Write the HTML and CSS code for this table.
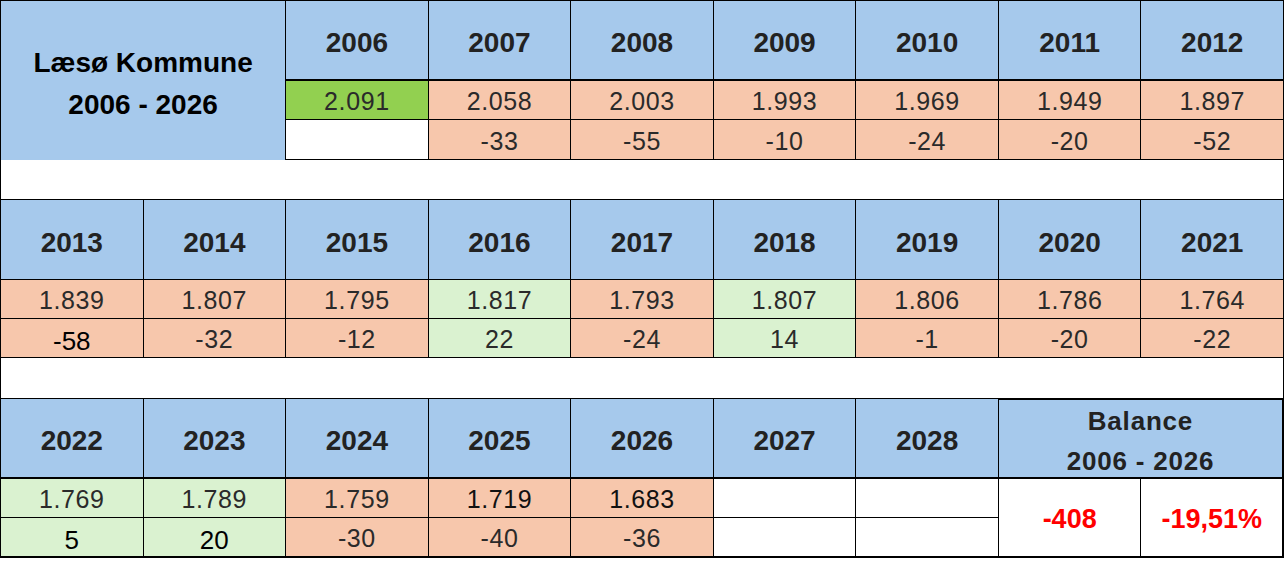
FILE: index.html
```html
<!DOCTYPE html>
<html lang="da">
<head>
<meta charset="utf-8">
<title>Læsø Kommune 2006 - 2026</title>
<link rel="stylesheet" href="styles.css">
</head>
<body>
<div class="sheet">
  <div class="cell title">Læsø Kommune<br>2006 - 2026</div>
  <div class="cell hd hd-thick">2006</div>
  <div class="cell hd hd-thick">2007</div>
  <div class="cell hd hd-thick">2008</div>
  <div class="cell hd hd-thick">2009</div>
  <div class="cell hd hd-thick">2010</div>
  <div class="cell hd hd-thick">2011</div>
  <div class="cell hd hd-thick">2012</div>

  <div class="cell val bright">2.091</div>
  <div class="cell val neg">2.058</div>
  <div class="cell val neg">2.003</div>
  <div class="cell val neg">1.993</div>
  <div class="cell val neg">1.969</div>
  <div class="cell val neg">1.949</div>
  <div class="cell val neg">1.897</div>

  <div class="cell val empty"></div>
  <div class="cell val neg">-33</div>
  <div class="cell val neg">-55</div>
  <div class="cell val neg">-10</div>
  <div class="cell val neg">-24</div>
  <div class="cell val neg">-20</div>
  <div class="cell val neg">-52</div>

  <div class="cell spacer"></div>

  <div class="cell hd">2013</div>
  <div class="cell hd">2014</div>
  <div class="cell hd">2015</div>
  <div class="cell hd">2016</div>
  <div class="cell hd">2017</div>
  <div class="cell hd">2018</div>
  <div class="cell hd">2019</div>
  <div class="cell hd">2020</div>
  <div class="cell hd">2021</div>

  <div class="cell val neg">1.839</div>
  <div class="cell val neg">1.807</div>
  <div class="cell val neg">1.795</div>
  <div class="cell val pos">1.817</div>
  <div class="cell val neg">1.793</div>
  <div class="cell val pos">1.807</div>
  <div class="cell val neg">1.806</div>
  <div class="cell val neg">1.786</div>
  <div class="cell val neg">1.764</div>

  <div class="cell val neg alt">-58</div>
  <div class="cell val neg">-32</div>
  <div class="cell val neg">-12</div>
  <div class="cell val pos">22</div>
  <div class="cell val neg">-24</div>
  <div class="cell val pos">14</div>
  <div class="cell val neg">-1</div>
  <div class="cell val neg">-20</div>
  <div class="cell val neg">-22</div>

  <div class="cell spacer"></div>

  <div class="cell hd hd-thick">2022</div>
  <div class="cell hd hd-thick">2023</div>
  <div class="cell hd hd-thick">2024</div>
  <div class="cell hd hd-thick">2025</div>
  <div class="cell hd hd-thick">2026</div>
  <div class="cell hd hd-thick">2027</div>
  <div class="cell hd hd-thick">2028</div>
  <div class="cell hd hd-thick balance">Balance<br>2006 - 2026</div>

  <div class="cell val pos">1.769</div>
  <div class="cell val pos">1.789</div>
  <div class="cell val neg">1.759</div>
  <div class="cell val neg dark">1.719</div>
  <div class="cell val neg dark">1.683</div>
  <div class="cell val empty"></div>
  <div class="cell val empty"></div>
  <div class="cell total">-408</div>
  <div class="cell total total-last">-19,51%</div>

  <div class="cell val pos alt last">5</div>
  <div class="cell val pos alt last">20</div>
  <div class="cell val neg last">-30</div>
  <div class="cell val neg last">-40</div>
  <div class="cell val neg last">-36</div>
  <div class="cell val empty last"></div>
  <div class="cell val empty last"></div>
</div>
</body>
</html>
```

FILE: styles.css
```css
html, body {
  margin: 0;
  padding: 0;
  background: #ffffff;
}

body {
  font-family: "Liberation Sans", Arial, sans-serif;
}

.sheet {
  width: 1284px;
  box-sizing: border-box;
  display: grid;
  grid-template-columns: repeat(9, 1fr);
  grid-template-rows: 80px 39px 40px 40px 80px 39px 39px 41px 80px 39px 40px;
  border-left: 1px solid #000;
  border-top: 1px solid #000;
}

.cell {
  box-sizing: border-box;
  border-right: 1px solid #000;
  border-bottom: 1px solid #000;
  display: flex;
  align-items: center;
  justify-content: center;
  text-align: center;
}

.title {
  grid-column: span 2;
  grid-row: span 3;
  background: #a6c9ec;
  border-bottom: none;
  font-weight: bold;
  font-size: 28px;
  line-height: 42px;
  color: #000;
  padding-top: 6px;
}

.hd {
  background: #a6c9ec;
  font-weight: bold;
  font-size: 28px;
  color: #222;
  padding-top: 6px;
}

.hd-thick {
  border-bottom: 2px solid #000;
}

.val {
  font-size: 25px;
  letter-spacing: 0.6px;
  color: #2a2a2a;
  padding-top: 3px;
}

.neg {
  background: #f7c7ac;
}

.pos {
  background: #daf2d0;
}

.bright {
  background: #92d050;
}

.empty {
  background: #ffffff;
}

.alt {
  color: #000;
  font-size: 26px;
  letter-spacing: 0;
  padding-top: 6px;
}

.dark {
  color: #111;
}

.spacer {
  grid-column: span 9;
  background: #ffffff;
}

.balance {
  grid-column: span 2;
  flex-direction: column;
  line-height: 40px;
  font-size: 26px;
  letter-spacing: 0.8px;
  border-top: 1px solid #000;
  border-right: 2px solid #000;
  padding-top: 4px;
}

.total {
  grid-row: span 2;
  background: #ffffff;
  color: #ff0000;
  font-weight: bold;
  font-size: 27px;
  border-bottom: 2px solid #000;
  padding-top: 4px;
}

.total-last {
  border-right: 2px solid #000;
}

.last {
  border-bottom: 2px solid #000;
}
```
